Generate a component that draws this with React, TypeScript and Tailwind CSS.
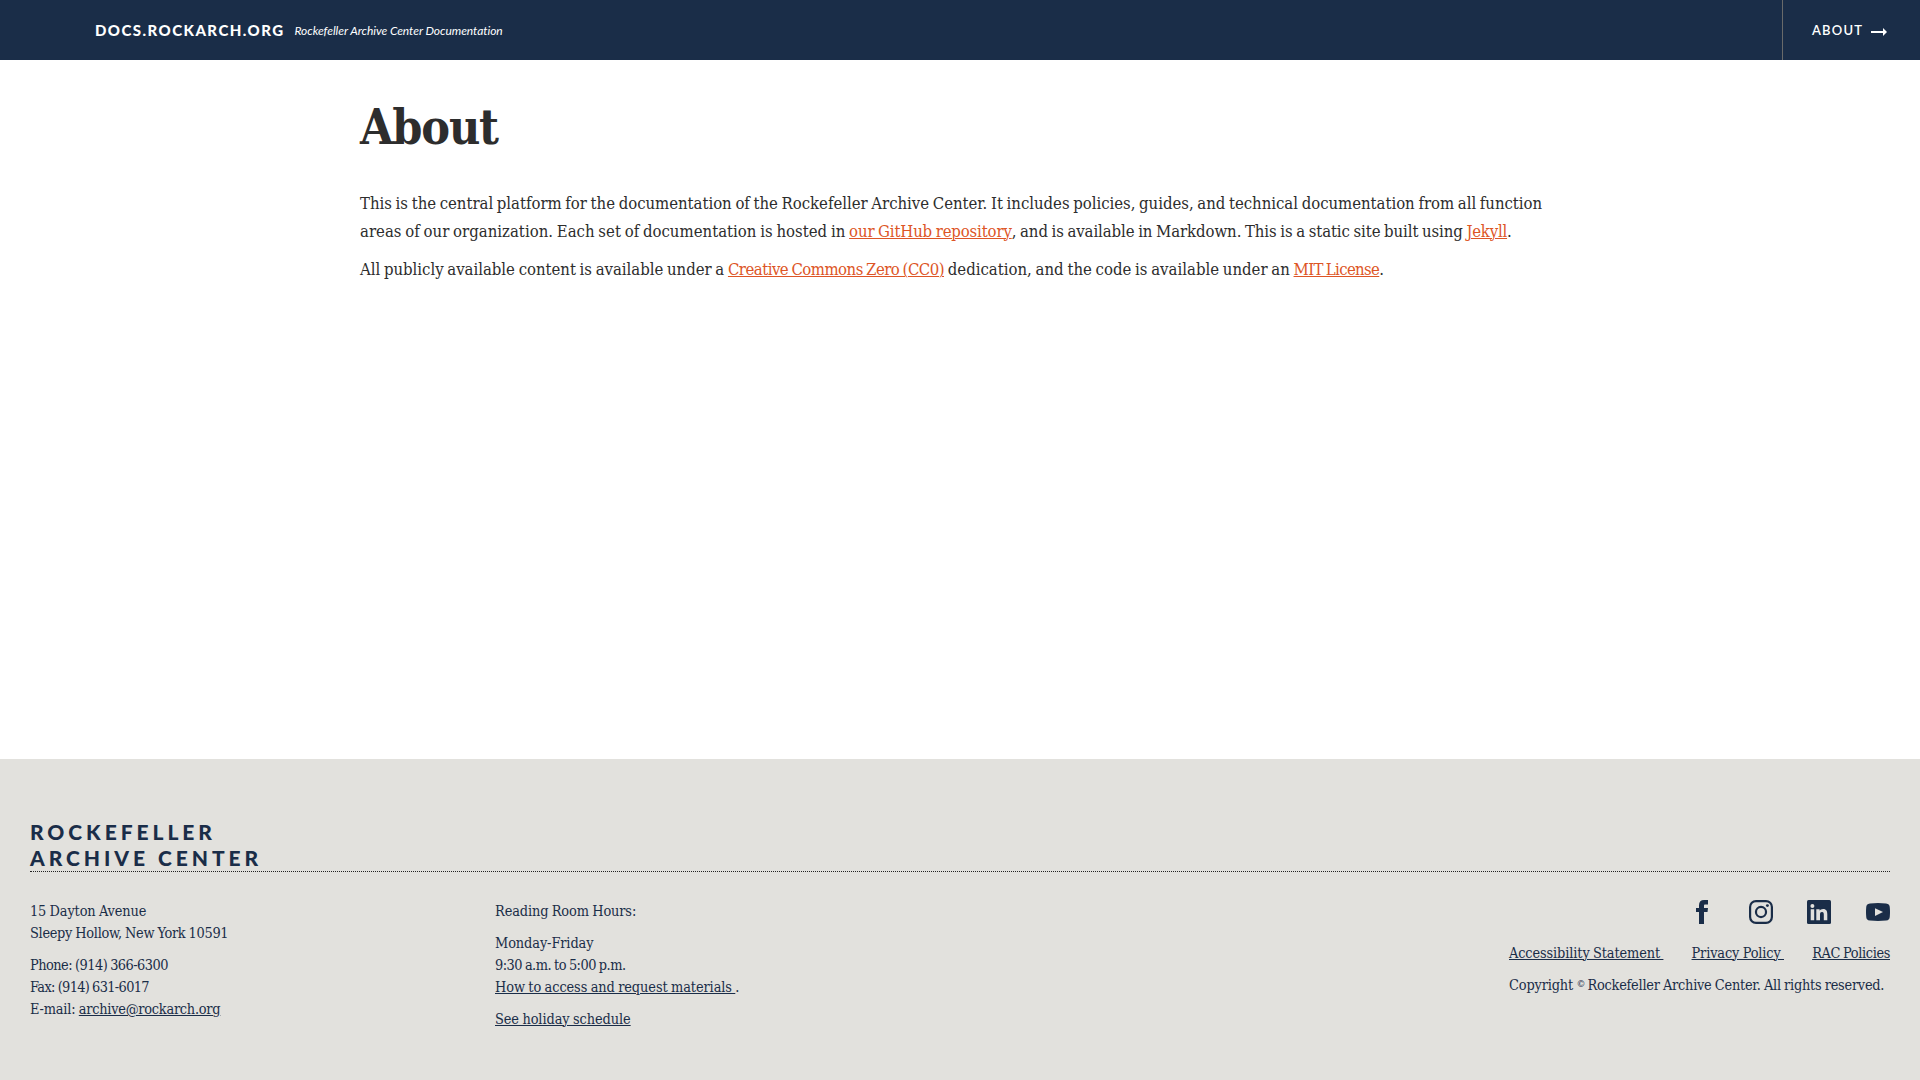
import React from 'react';

function ArrowIcon() {
  return (
    <svg className="mt-[3px] h-2 w-4" viewBox="0 0 16 8" fill="currentColor" aria-hidden="true">
      <path d="M0 3h12V0l4 4-4 4V5H0z" />
    </svg>
  );
}

function FacebookIcon() {
  return (
    <svg className="h-6 w-3" viewBox="0 0 12 24" fill="currentColor">
      <path d="M3 24V12H0V8h3V5.2C3 1.7 4.9 0 8 0h4v4.6H9.2C8.300 4.600 8 5 8 5.800V8h4l-.5 4H8v12z" />
    </svg>
  );
}

function InstagramIcon() {
  return (
    <svg className="size-6" viewBox="0 0 24 24" fill="none" stroke="currentColor">
      <rect x="1.100" y="1.100" width="21.800" height="21.800" rx="5.900" strokeWidth="2.200" />
      <circle cx="12" cy="12" r="5.050" strokeWidth="2.200" />
      <circle cx="18.400" cy="5.600" r="1.450" fill="currentColor" stroke="none" />
    </svg>
  );
}

function LinkedInIcon() {
  return (
    <svg className="size-6" viewBox="0 0 24 24">
      <rect width="24" height="24" rx="1.500" fill="currentColor" />
      <g fill="#e2e1dd">
        <circle cx="5.400" cy="5.900" r="2" />
        <path d="M3.700 9.200h3.500v11H3.700zM9.300 9.200h3.300v1.500c.6-1 1.800-1.800 3.500-1.800 3.500 0 4.200 2.300 4.200 5.300v6h-3.500v-5.300c0-1.300 0-2.900-1.800-2.900s-2 1.400-2 2.800v5.400H9.300z" />
      </g>
    </svg>
  );
}

function YouTubeIcon() {
  return (
    <svg className="h-[18px] w-6" viewBox="0 0 24 18">
      <path d="M4 .4Q12-.4 20 .4C22.900.700 23.700 2 23.800 4.500q.4 4.500 0 9c-.2 2.500-1 3.800-3.800 4.100q-8 .8-16 0C1.100 17.300.3 16 .2 13.500q-.4-4.500 0-9C.3 2 1.100.7 4 .4z" fill="currentColor" />
      <path d="M9 5.200 17 9l-8 4z" fill="#e2e1dd" />
    </svg>
  );
}

const bodyLink = 'text-[#dd5526] underline underline-offset-1 decoration-1';
const footLink = 'underline underline-offset-1 decoration-1';

export default function App() {
  return (
    <div className="flex h-[1080px] w-full flex-col overflow-hidden bg-white font-['DejaVu_Serif_Condensed','DejaVu_Serif',serif] font-stretch-condensed">
      <header className="flex h-[60px] shrink-0 items-stretch justify-between bg-[#1a2d48] font-['Lato',sans-serif] text-white">
        <div className="flex items-center pl-[95px]">
          <a className="mt-px text-[15px] font-black tracking-[1.45px]">DOCS.ROCKARCH.ORG</a>
          <span className="ml-[10px] mt-px text-xs italic tracking-[-0.05px]">Rockefeller Archive Center Documentation</span>
        </div>
        <nav className="flex w-[138px] items-center border-l border-[#696a6a] pl-[29px]">
          <a className="mt-px flex items-center gap-2 text-[13px] font-semibold tracking-[1.200px]">
            ABOUT <ArrowIcon />
          </a>
        </nav>
      </header>

      <main className="w-[1260px] grow whitespace-nowrap pl-[360px] pt-[37px] text-[16.6px] leading-7 text-[#2d2d2d] [word-spacing:-1px]">
        <h1 className="mb-[33px] text-[48px] font-bold leading-[60px] tracking-[-1.2px]">About</h1>
        <p className="mb-2.5">
          <span className="tracking-[-0.03px]">This is the central platform for the documentation of the Rockefeller Archive Center. It includes policies, guides, and technical documentation from all function</span>
          <br />
          <span className="tracking-[0.012px]">areas of our organization. Each set of documentation is hosted in </span>
          <a className={`${bodyLink} tracking-[-0.14px]`}>our GitHub repository</a>
          <span className="tracking-[-0.085px]">, and is available in Markdown. This is a static site built using </span>
          <a className={`${bodyLink} tracking-[-0.2px]`}>Jekyll</a>.
        </p>
        <p>
          <span className="tracking-[-0.025px]">All publicly available content is available under a </span>
          <a className={`${bodyLink} tracking-[-0.51px]`}>Creative Commons Zero (CC0)</a>
          <span> dedication, and the code is available under an </span>
          <a className={`${bodyLink} tracking-[-0.65px]`}>MIT License</a>.
        </p>
      </main>

      <footer className="h-[321px] shrink-0 bg-[#e2e1dd] px-[30px] pt-[60px] text-[14.4px] leading-[22px] text-[#1a2d48] [word-spacing:-0.6px]">
        <div className="border-b border-dotted border-[#222] font-['Lato',sans-serif] text-[21px] font-black leading-[26px] tracking-[3.95px] [word-spacing:0px]">
          ROCKEFELLER
          <br />
          ARCHIVE CENTER
        </div>
        <div className="flex whitespace-nowrap pt-7">
          <address className="flex w-[465px] flex-col gap-2.5 not-italic">
            <p>
              <span className="tracking-[-0.13px]">15 Dayton Avenue</span>
              <br />
              <span className="tracking-[-0.3px]">Sleepy Hollow, New York 10591</span>
            </p>
            <p>
              <span className="tracking-[-0.53px]">Phone: (914) 366-6300</span>
              <br />
              <span className="tracking-[-0.65px]">Fax: (914) 631-6017</span>
              <br />
              <span className="tracking-[-0.18px]">E-mail: </span>
              <a className={`${footLink} tracking-[-0.25px]`}>archive@rockarch.org</a>
            </p>
          </address>
          <div className="flex grow flex-col gap-2.5">
            <p className="tracking-[-0.12px]">Reading Room Hours:</p>
            <p>
              <span className="tracking-[-0.1px]">Monday-Friday</span>
              <br />
              <span className="tracking-[-0.53px]">9:30 a.m. to 5:00 p.m.</span>
              <br />
              <a className={`${footLink} tracking-[-0.085px]`}>How to access and request materials </a>.
            </p>
            <p>
              <a className={`${footLink} tracking-[-0.08px]`}>See holiday schedule</a>
            </p>
          </div>
          <div className="w-[381px]">
            <div className="flex h-6 items-center justify-end">
              <a className="mr-[41px]"><FacebookIcon /></a>
              <a className="mr-[34px]"><InstagramIcon /></a>
              <a className="mr-[35px]"><LinkedInIcon /></a>
              <a><YouTubeIcon /></a>
            </div>
            <div className="mt-[18px] flex justify-between">
              <a className={`${footLink} whitespace-pre tracking-[-0.12px]`}>{'Accessibility Statement '}</a>
              <a className={`${footLink} whitespace-pre tracking-[-0.13px]`}>{'Privacy Policy '}</a>
              <a className={`${footLink} tracking-[-0.38px]`}>RAC Policies</a>
            </div>
            <p className="mt-2.5">
              <span className="tracking-[-0.15px]">Copyright </span>
              <span className="inline-block w-[11px] -translate-y-[3px] text-[10px] leading-none">©</span>
              <span className="tracking-[-0.24px]">Rockefeller Archive Center. All rights reserved.</span>
            </p>
          </div>
        </div>
      </footer>
    </div>
  );
}
